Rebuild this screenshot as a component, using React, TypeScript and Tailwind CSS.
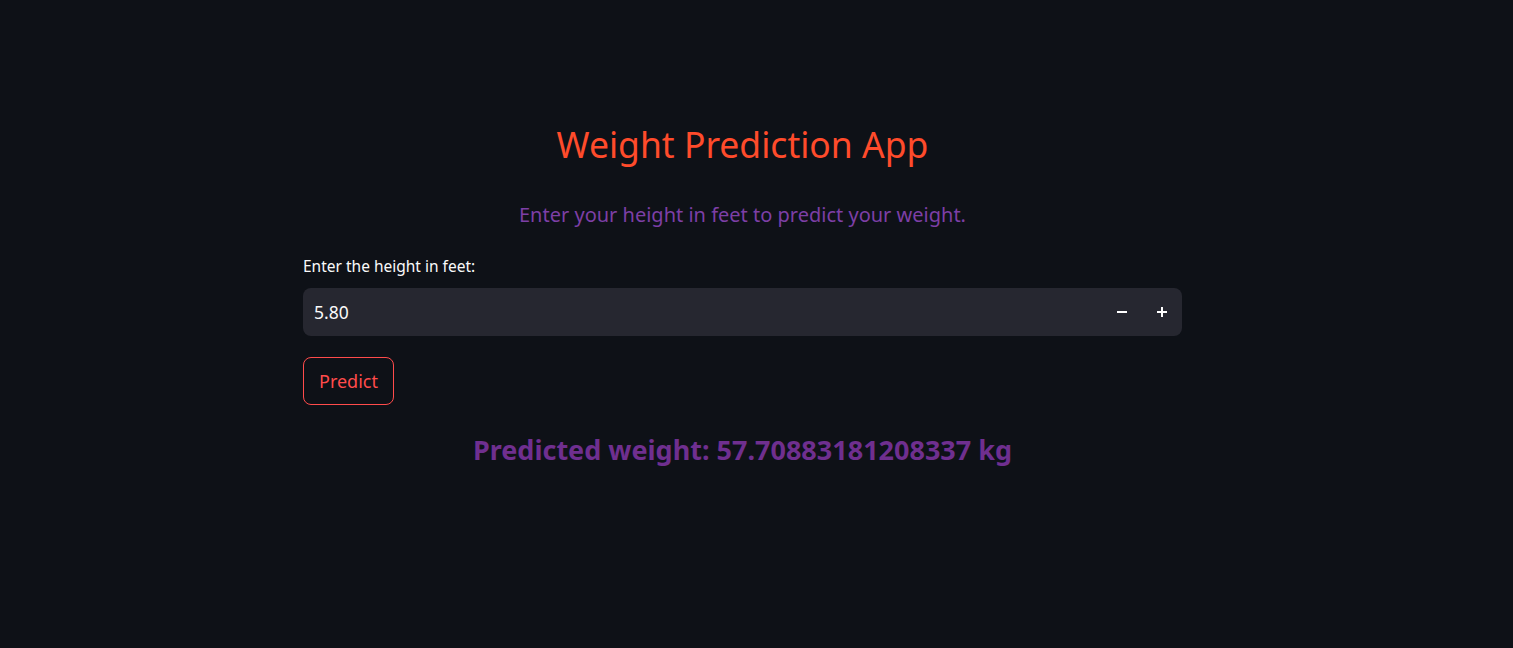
export default function App() {
  return (
    <div className="min-h-[648px] w-full bg-[#0e1117] pr-[28px] font-['Noto_Sans',sans-serif]">
      <div className="mx-auto w-[879px] pt-[118px]">
        <h1 className="text-center text-[35.5px] leading-[52px] text-[#ff4b2b]">Weight Prediction App</h1>
        <p className="mt-[30px] text-center text-[20px] leading-[30px] text-[#7d3fa6]">
          Enter your height in feet to predict your weight.
        </p>
        <label className="mt-[26px] block text-[15.5px] leading-[20px] text-[#fafafa]">Enter the height in feet:</label>
        <div className="mt-[12px] flex h-[48px] items-center rounded-[8px] bg-[#262730] pl-[11px] pr-[4px]">
          <span className="flex-1 text-[17.5px] text-[#fafafa]">5.80</span>
          <button className="flex h-[32px] w-[32px] items-center justify-center text-white">
            <svg width="12" height="12" viewBox="0 0 12 12"><rect x="1" y="5" width="10" height="2" fill="currentColor" /></svg>
          </button>
          <button className="ml-[8px] flex h-[32px] w-[32px] items-center justify-center text-white">
            <svg width="12" height="12" viewBox="0 0 12 12"><rect x="1" y="5" width="10" height="2" fill="currentColor" /><rect x="5" y="1" width="2" height="10" fill="currentColor" /></svg>
          </button>
        </div>
        <button className="mt-[21px] h-[48px] rounded-[8px] border border-[#ff4b4b] px-[15px] text-[18px] text-[#ff4b4b]">
          Predict
        </button>
        <p className="mt-[25px] text-center text-[27px] font-bold leading-[40px] text-[#6f2f8f]">
          Predicted weight: 57.70883181208337 kg
        </p>
      </div>
    </div>
  );
}
